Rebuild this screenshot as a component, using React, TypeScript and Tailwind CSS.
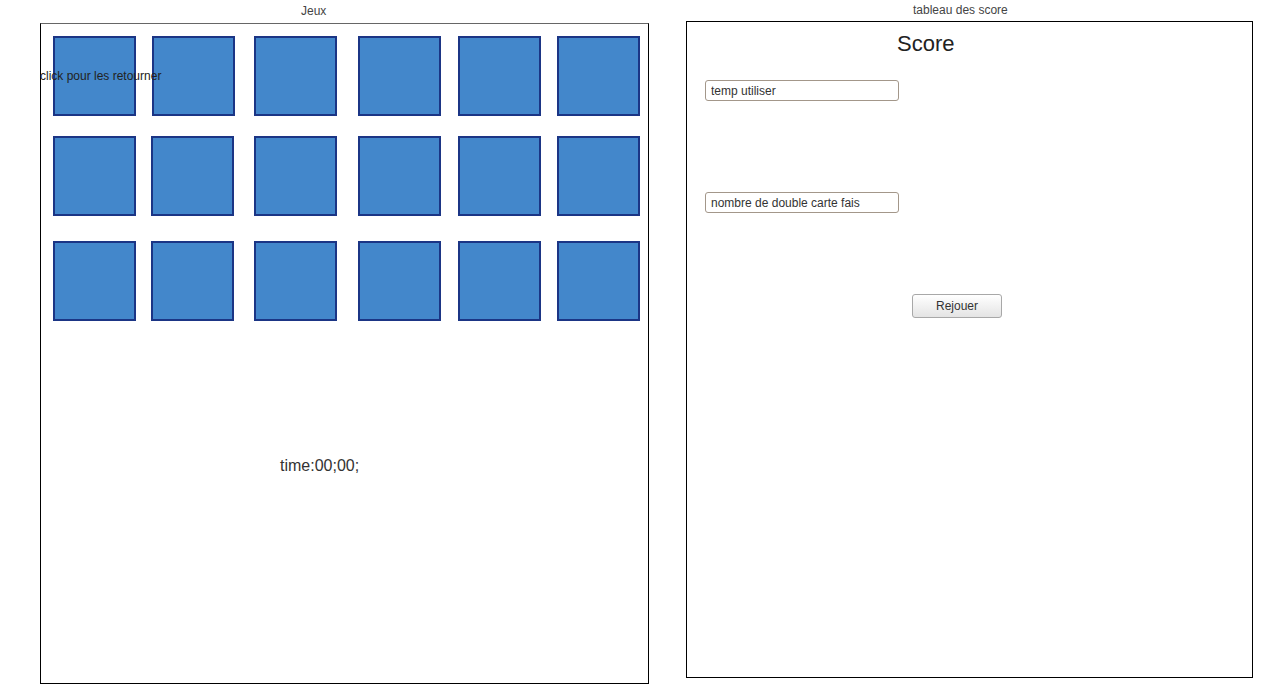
const rowMargins = [
  ["ml-0", "ml-[16px]", "ml-[19px]", "ml-[21px]", "ml-[17px]", "ml-[16px]"],
  ["ml-0", "ml-[15px]", "ml-[20px]", "ml-[21px]", "ml-[17px]", "ml-[16px]"],
  ["ml-0", "ml-[15px]", "ml-[20px]", "ml-[21px]", "ml-[17px]", "ml-[16px]"],
];
const rowTops = ["mt-0", "mt-[20px]", "mt-[25px]"];

function Card({ className }: { className: string }) {
  return (
    <button
      type="button"
      className={`h-[80px] w-[83px] shrink-0 border-2 border-[#1b3585] bg-[#4387cb] ${className}`}
    />
  );
}

export default function App() {
  return (
    <div className="flex h-[695px] w-[1270px] bg-white font-['Liberation_Sans',Arial,sans-serif] text-[#333]">
      {/* Jeux */}
      <div className="ml-[40px] w-[609px]">
        <div className="h-[23px] pl-[261px] text-xs leading-[22px] text-[#444]">Jeux</div>
        <div className="relative h-[661px] border border-black border-t-[#666] px-[12px] pt-[12px]">
          {rowMargins.map((margins, r) => (
            <div key={r} className={`flex ${rowTops[r]}`}>
              {margins.map((m, c) => (
                <Card key={c} className={m} />
              ))}
            </div>
          ))}
          <span className="absolute left-[-1px] top-[45px] text-xs leading-[14px] text-[#222]">
            click pour les retourner
          </span>
          <p className="ml-[227px] mt-[136px] text-base leading-[18px]">time:00;00;</p>
        </div>
      </div>

      {/* Score */}
      <div className="ml-[37px] w-[567px]">
        <div className="h-[21px] pl-[227px] text-xs leading-[21px] text-[#444]">tableau des score</div>
        <div className="flex h-[657px] flex-col items-start border border-black">
          <h2 className="ml-[210px] mt-[9px] text-[22px] leading-[26px] text-[#222]">Score</h2>
          <input
            readOnly
            defaultValue="temp utiliser"
            className="ml-[18px] mt-[23px] h-[21px] w-[194px] rounded-[3px] border border-[#a3978a] px-[5px] text-xs text-[#333] outline-none"
          />
          <input
            readOnly
            defaultValue="nombre de double carte fais"
            className="ml-[18px] mt-[91px] h-[21px] w-[194px] rounded-[3px] border border-[#a3978a] px-[5px] text-xs text-[#333] outline-none"
          />
          <button
            type="button"
            className="ml-[225px] mt-[81px] h-[24px] w-[90px] rounded-[3px] border border-[#a8a8a8] bg-gradient-to-b from-white to-[#e4e4e4] text-xs text-[#333]"
          >
            Rejouer
          </button>
        </div>
      </div>
    </div>
  );
}
